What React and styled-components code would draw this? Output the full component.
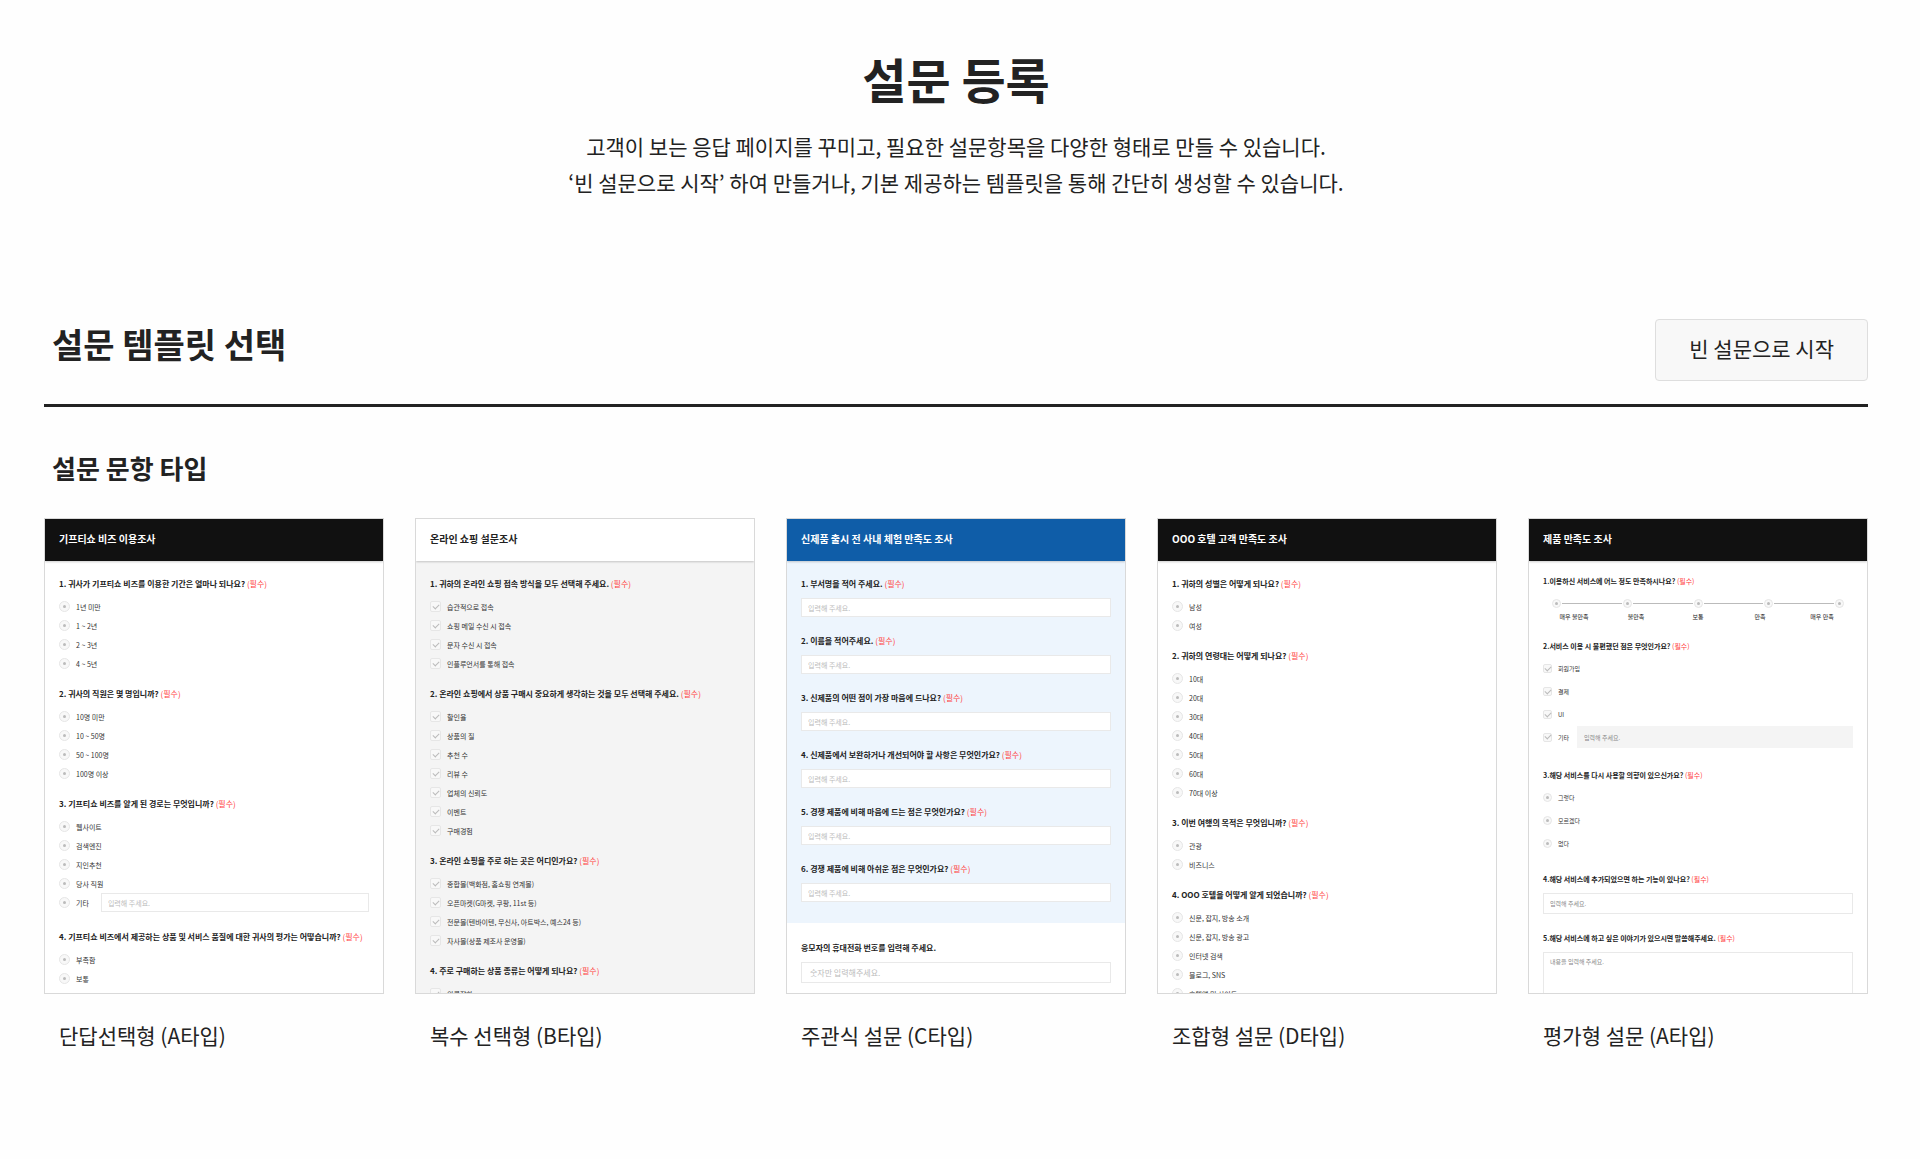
import React, { useId } from 'react';
import styled, { createGlobalStyle, css } from 'styled-components';

const templates = [
  {
    name: '단답선택형 (A타입)',
    title: '기프티쇼 비즈 이용조사',
    questions: [
      { text: '1. 귀사가 기프티쇼 비즈를 이용한 기간은 얼마나 되나요?', type: 'radio', options: ['1년 미만', '1 ~ 2년', '2 ~ 3년', '4 ~ 5년'] },
      { text: '2. 귀사의 직원은 몇 명입니까?', type: 'radio', options: ['10명 미만', '10 ~ 50명', '50 ~ 100명', '100명 이상'] },
      { text: '3. 기프티쇼 비즈를 알게 된 경로는 무엇입니까?', type: 'radio', options: ['웹사이트', '검색엔진', '지인추천', '당사 직원'], other: true },
      { text: '4. 기프티쇼 비즈에서 제공하는 상품 및 서비스 품질에 대한 귀사의 평가는 어떻습니까?', type: 'radio', options: ['부족함', '보통'] },
    ],
  },
  {
    name: '복수 선택형 (B타입)',
    title: '온라인 쇼핑 설문조사',
    head: '#fff',
    headText: '#222',
    body: '#f4f4f4',
    questions: [
      { text: '1. 귀하의 온라인 쇼핑 접속 방식을 모두 선택해 주세요.', type: 'checkbox', options: ['습관적으로 접속', '쇼핑 메일 수신 시 접속', '문자 수신 시 접속', '인플루언서를 통해 접속'] },
      { text: '2. 온라인 쇼핑에서 상품 구매시 중요하게 생각하는 것을 모두 선택해 주세요.', type: 'checkbox', options: ['할인율', '상품의 질', '추천 수', '리뷰 수', '업체의 신뢰도', '이벤트', '구매경험'] },
      { text: '3. 온라인 쇼핑을 주로 하는 곳은 어디인가요?', type: 'checkbox', options: ['종합몰(백화점, 홈쇼핑 연계몰)', '오픈마켓(G마켓, 쿠팡, 11st 등)', '전문몰(텐바이텐, 무신사, 아트박스, 예스24 등)', '자사몰(상품 제조사 운영몰)'] },
      { text: '4. 주로 구매하는 상품 종류는 어떻게 되나요?', type: 'checkbox', options: ['의류잡화'] },
    ],
  },
  {
    name: '주관식 설문 (C타입)',
    title: '신제품 출시 전 사내 체험 만족도 조사',
    head: '#0f5da8',
    body: '#edf5fd',
    questions: [
      { text: '1. 부서명을 적어 주세요.', type: 'text' },
      { text: '2. 이름을 적어주세요.', type: 'text' },
      { text: '3. 신제품의 어떤 점이 가장 마음에 드나요?', type: 'text' },
      { text: '4. 신제품에서 보완하거나 개선되어야 할 사항은 무엇인가요?', type: 'text' },
      { text: '5. 경쟁 제품에 비해 마음에 드는 점은 무엇인가요?', type: 'text' },
      { text: '6. 경쟁 제품에 비해 아쉬운 점은 무엇인가요?', type: 'text' },
    ],
    phone: true,
  },
  {
    name: '조합형 설문 (D타입)',
    title: 'OOO 호텔 고객 만족도 조사',
    questions: [
      { text: '1. 귀하의 성별은 어떻게 되나요?', type: 'radio', options: ['남성', '여성'] },
      { text: '2. 귀하의 연령대는 어떻게 되나요?', type: 'radio', options: ['10대', '20대', '30대', '40대', '50대', '60대', '70대 이상'] },
      { text: '3. 이번 여행의 목적은 무엇입니까?', type: 'radio', options: ['관광', '비즈니스'] },
      { text: '4. OOO 호텔을 어떻게 알게 되었습니까?', type: 'radio', options: ['신문, 잡지, 방송 소개', '신문, 잡지, 방송 광고', '인터넷 검색', '블로그, SNS', '호텔앱 및 사이트'] },
    ],
  },
  {
    name: '평가형 설문 (A타입)',
    title: '제품 만족도 조사',
    small: true,
    questions: [
      { text: '1.이용하신 서비스에 어느 정도 만족하시나요?', type: 'scale', options: ['매우 불만족', '불만족', '보통', '만족', '매우 만족'] },
      { text: '2.서비스 이용 시 불편했던 점은 무엇인가요?', type: 'checkbox', options: ['회원가입', '결제', 'UI'], other: true },
      { text: '3.해당 서비스를 다시 사용할 의향이 있으신가요?', type: 'radio', options: ['그렇다', '모르겠다', '없다'] },
      { text: '4.해당 서비스에 추가되었으면 하는 기능이 있나요?', type: 'text' },
      { text: '5.해당 서비스에 하고 싶은 이야기가 있으시면 말씀해주세요.', type: 'textarea' },
    ],
  },
];

const Option = ({ type, group, label, small }) => {
  const id = useId();
  return (
    <OptionRow $small={small}>
      <Control type={type} name={group} id={id} $small={small} />
      <label htmlFor={id}>{label}</label>
    </OptionRow>
  );
};

const OtherOption = ({ type, group, small }) => {
  const id = useId();
  return (
    <OptionRow $small={small} $other>
      <Control type={type} name={group} id={id} $small={small} />
      <label htmlFor={id}>기타</label>
      <OtherInput aria-label="기타 입력" placeholder="입력해 주세요." $small={small} />
    </OptionRow>
  );
};

const Scale = ({ group, options }) => (
  <>
    <ScaleTrack>
      {options.map((option, i) => (
        <React.Fragment key={option}>
          {i > 0 && <ScaleLine />}
          <Control type="radio" name={group} id={`${group}-${i}`} $small />
        </React.Fragment>
      ))}
    </ScaleTrack>
    <ScaleLabels>
      {options.map((option, i) => (
        <label key={option} htmlFor={`${group}-${i}`}>{option}</label>
      ))}
    </ScaleLabels>
  </>
);

const Question = ({ question, small }) => {
  const id = useId();
  const { text, type, options = [], other } = question;
  const required = <Required>(필수)</Required>;

  if (type === 'text' || type === 'textarea') {
    return (
      <div>
        <QuestionText as="label" htmlFor={id} $small={small}>{text} {required}</QuestionText>
        {type === 'text' ? (
          <Field id={id} placeholder="입력해 주세요." $small={small} />
        ) : (
          <Field as="textarea" id={id} placeholder="내용을 입력해 주세요." $small={small} $tall />
        )}
      </div>
    );
  }

  return (
    <div role="group" aria-labelledby={id}>
      <QuestionText id={id} $small={small}>{text} {required}</QuestionText>
      {type === 'scale' ? (
        <Scale group={`${id}-scale`} options={options} />
      ) : (
        <Options $small={small}>
          {options.map(option => (
            <Option key={option} type={type} group={`${id}-option`} label={option} small={small} />
          ))}
          {other && <OtherOption type={type} group={`${id}-option`} small={small} />}
        </Options>
      )}
    </div>
  );
};

const TemplateCard = ({ template }) => {
  const { name, title, head, headText, body, small, questions, phone } = template;
  return (
    <Card>
      <Preview>
        <PreviewHead $bg={head} $color={headText}>{title}</PreviewHead>
        <PreviewBody $bg={body} $small={small}>
          {questions.map(question => (
            <Question key={question.text} question={question} small={small} />
          ))}
        </PreviewBody>
        {phone && (
          <Phone>
            <QuestionText as="label" htmlFor="phone">응모자의 휴대전화 번호를 입력해 주세요.</QuestionText>
            <PhoneField id="phone" placeholder="숫자만 입력해주세요." />
          </Phone>
        )}
      </Preview>
      <Caption>{name}</Caption>
    </Card>
  );
};

const App = () => (
  <Page>
    <GlobalStyle />
    <Intro>
      <Title>설문 등록</Title>
      <Description>
        고객이 보는 응답 페이지를 꾸미고, 필요한 설문항목을 다양한 형태로 만들 수 있습니다.
        <br />
        ‘빈 설문으로 시작’ 하여 만들거나, 기본 제공하는 템플릿을 통해 간단히 생성할 수 있습니다.
      </Description>
    </Intro>
    <SectionHead>
      <SectionTitle>설문 템플릿 선택</SectionTitle>
      <StartButton type="button">빈 설문으로 시작</StartButton>
    </SectionHead>
    <TypeTitle>설문 문항 타입</TypeTitle>
    <CardGrid>
      {templates.map(template => (
        <TemplateCard key={template.name} template={template} />
      ))}
    </CardGrid>
  </Page>
);

export default App;

const GlobalStyle = createGlobalStyle`
  * {
    box-sizing: border-box;
  }
  body {
    margin: 0;
    background: #fefefe;
    color: #222;
  }
  body, button, input, textarea {
    font-family: 'Noto Sans CJK KR', 'Noto Sans', sans-serif;
  }
`;

const Page = styled.main`
  padding: 42px 52px 60px 44px;
`;

const Intro = styled.header`
  text-align: center;
`;

const Title = styled.h1`
  margin: 0;
  font-size: 48px;
  line-height: 72px;
  font-weight: 700;
`;

const Description = styled.p`
  margin: 14px 0 0;
  font-size: 21px;
  line-height: 36px;
`;

const SectionHead = styled.div`
  display: flex;
  justify-content: space-between;
  align-items: flex-start;
  margin-top: 119px;
  padding: 0 0 23px 8px;
  border-bottom: 3px solid #222;
`;

const SectionTitle = styled.h2`
  margin: 0;
  font-size: 34px;
  line-height: 50px;
  font-weight: 700;
`;

const StartButton = styled.button`
  padding: 12px 33px 16px;
  border: 1px solid #dedede;
  border-radius: 4px;
  background: #f8f8f8;
  color: #222;
  font-size: 21px;
  line-height: 32px;
  cursor: pointer;
`;

const TypeTitle = styled.h3`
  margin: 42px 0 31px;
  padding-left: 8px;
  font-size: 26px;
  line-height: 38px;
  font-weight: 700;
`;

const CardGrid = styled.div`
  display: grid;
  grid-template-columns: repeat(5, minmax(0, 1fr));
  gap: 31px;
`;

const Card = styled.figure`
  margin: 0;
`;

const Preview = styled.div`
  display: flex;
  flex-direction: column;
  aspect-ratio: 340 / 476;
  overflow: hidden;
  border: 1px solid #d9d9d9;
  background: #fff;
`;

const Caption = styled.figcaption`
  margin-top: 26px;
  padding-left: 15px;
  font-size: 21px;
  line-height: 30px;
`;

const PreviewHead = styled.div`
  z-index: 1;
  flex: none;
  padding: 10px 14px 12px;
  background: ${props => props.$bg || '#111'};
  color: ${props => props.$color || '#fff'};
  box-shadow: 0 1px 2px rgba(0, 0, 0, .2);
  font-size: 10px;
  line-height: 20px;
  font-weight: 700;
`;

const PreviewBody = styled.div`
  display: flex;
  flex-direction: column;
  flex: none;
  gap: ${props => (props.$small ? 17 : 14)}px;
  min-height: 0;
  padding: ${props => (props.$small ? 13 : 16)}px 14px 18px;
  background: ${props => props.$bg || '#fff'};
`;

const QuestionText = styled.div`
  display: block;
  font-size: ${props => (props.$small ? 7 : 8)}px;
  line-height: 14px;
  font-weight: 700;
  white-space: nowrap;
`;

const Required = styled.span`
  color: #ff4040;
  font-weight: 400;
`;

const Options = styled.div`
  margin-top: ${props => (props.$small ? 4 : 6)}px;
`;

const OptionRow = styled.div`
  display: flex;
  align-items: center;
  gap: 6px;
  height: ${props => (props.$small ? 23 : 19)}px;
  font-size: ${props => (props.$small ? 6 : 7)}px;
  color: #333;
  white-space: nowrap;
  ${props => props.$other && css`
    height: auto;
    margin-bottom: ${props.$small ? 3 : 4}px;
  `}
`;

const Control = styled.input`
  appearance: none;
  display: grid;
  place-items: center;
  flex: none;
  width: ${props => (props.$small ? 9 : 11)}px;
  height: ${props => (props.$small ? 9 : 11)}px;
  margin: 0;
  border: 1px solid #e6e6e6;
  border-radius: ${props => (props.type === 'radio' ? '50%' : '2px')};
  background: #f8f8f8;
  &::before {
    content: '';
    ${props => (props.type === 'radio' ? css`
      width: 3px;
      height: 3px;
      border-radius: 50%;
      background: #bbb;
    ` : css`
      width: 5px;
      height: 3px;
      margin-bottom: 2px;
      border-left: 1px solid #bbb;
      border-bottom: 1px solid #bbb;
      transform: rotate(-45deg);
    `)}
  }
`;

const Field = styled.input`
  display: block;
  width: 100%;
  height: ${props => (props.$small ? 21 : 19)}px;
  margin: 7px 0 ${props => (props.$small ? 0 : 3)}px;
  padding: 0 6px;
  border: 1px solid #e9e9e9;
  border-radius: 0;
  background: #fff;
  font-size: ${props => (props.$small ? 6 : 7)}px;
  resize: none;
  &::placeholder {
    color: ${props => (props.$small ? '#888' : '#bbb')};
  }
  ${props => props.$tall && css`
    height: 80px;
    padding: 4px 6px;
  `}
`;

const OtherInput = styled(Field)`
  flex: 1;
  min-width: 0;
  width: auto;
  margin: 0 0 0 ${props => (props.$small ? 2 : 6)}px;
  ${props => props.$small && css`
    height: 22px;
    border-color: #f4f4f4;
    background: #f4f4f4;
  `}
`;

const Phone = styled.div`
  flex: none;
  padding: 18px 14px 0;
`;

const PhoneField = styled(Field)`
  height: 21px;
  padding: 0 8px;
  font-size: 8px;
`;

const ScaleTrack = styled.div`
  display: flex;
  align-items: center;
  gap: 1px;
  margin-top: 11px;
  padding: 0 9px;
`;

const ScaleLine = styled.span`
  flex: 1;
  height: 1px;
  background: #bbb;
`;

const ScaleLabels = styled.div`
  display: grid;
  grid-template-columns: repeat(5, 1fr);
  margin-top: 4px;
  text-align: center;
  font-size: 6px;
  line-height: 10px;
`;
